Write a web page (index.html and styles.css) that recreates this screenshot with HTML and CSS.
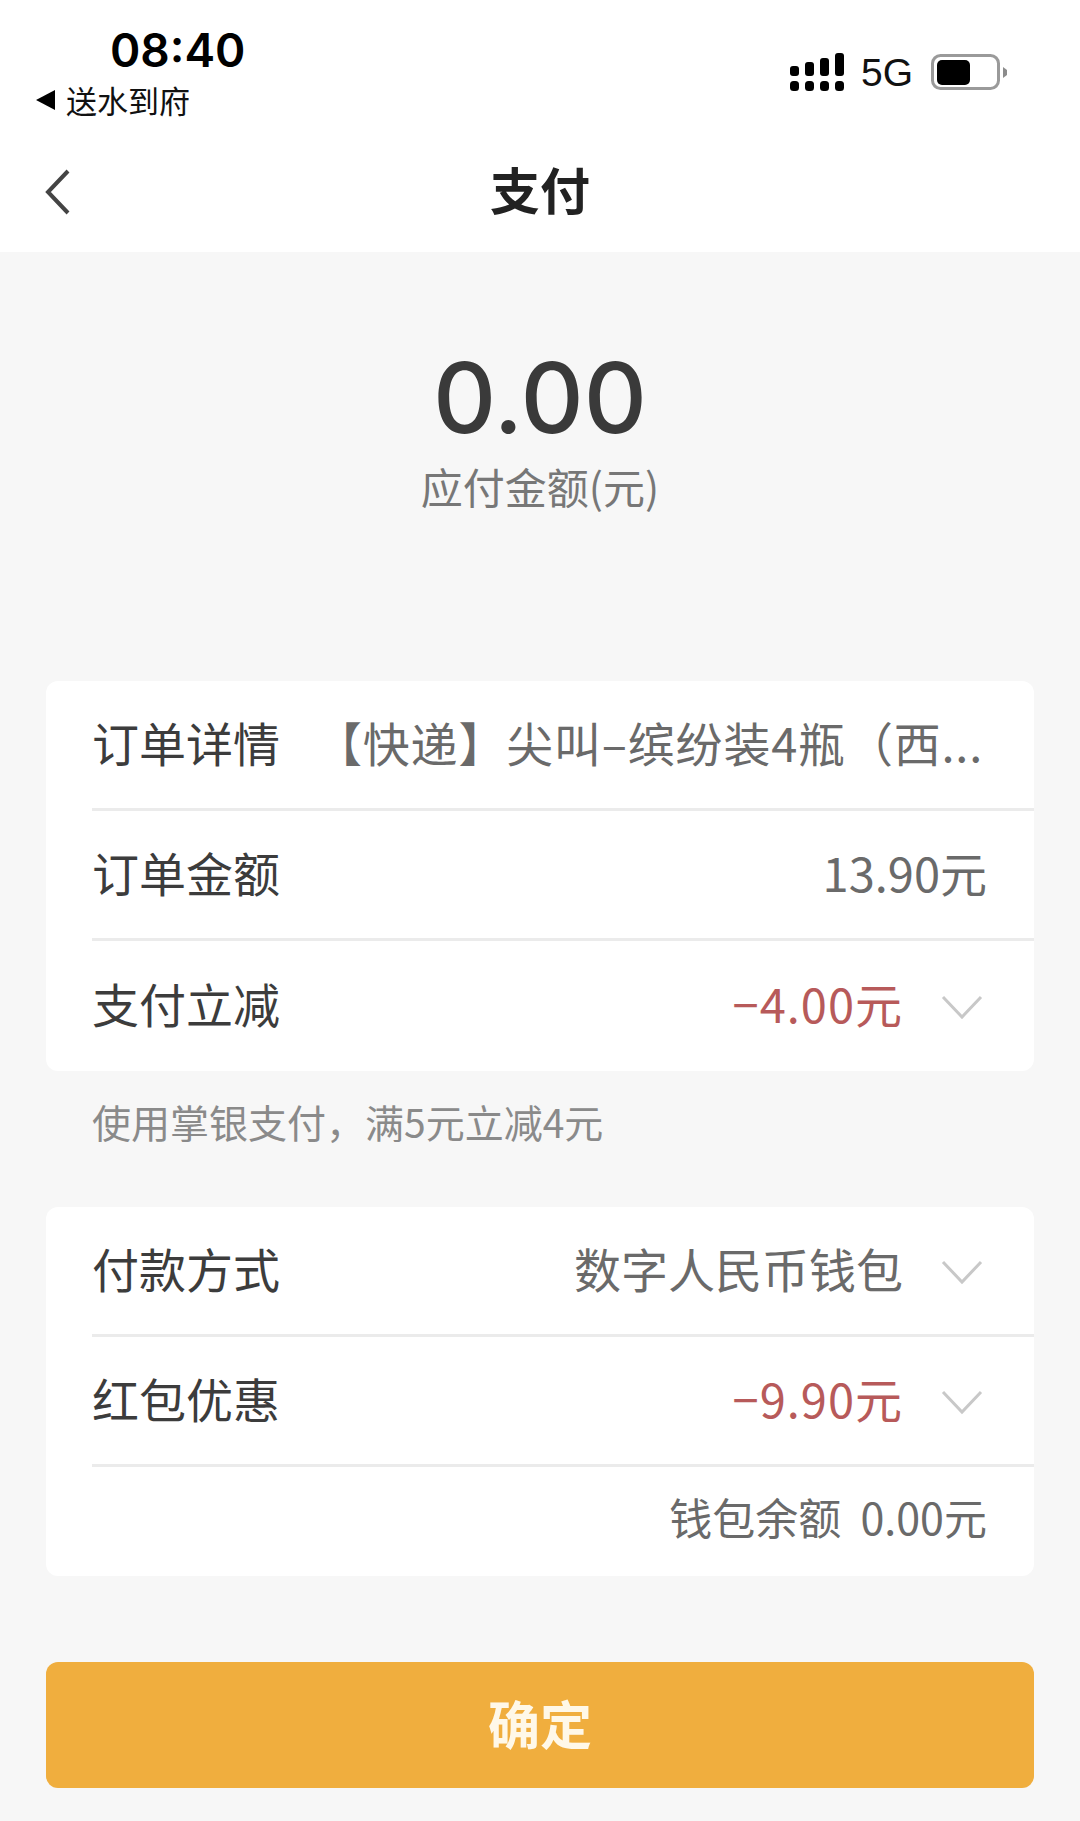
FILE: index.html
```html
<!DOCTYPE html>
<html lang="zh-CN">
<head>
    <meta charset="UTF-8">
    <meta name="viewport" content="width=device-width, initial-scale=1.0">
    <title>支付</title>
    <link rel="stylesheet" href="styles.css">
</head>
<body>
    <div class="top">
        <div class="status-bar">
            <div class="status-left">
                <div class="time">08:40</div>
                <div class="back-app"><span class="back-arrow"></span>送水到府</div>
            </div>
            <div class="status-right">
                <svg class="signal" width="54" height="38" viewBox="0 0 54 38">
                    <rect x="0" y="13" width="9" height="10" rx="3"/>
                    <rect x="15" y="9" width="9" height="14" rx="3"/>
                    <rect x="30" y="5" width="9" height="18" rx="3"/>
                    <rect x="45" y="0" width="9" height="23" rx="3"/>
                    <rect x="0" y="28" width="9" height="10" rx="3.5"/>
                    <rect x="15" y="28" width="9" height="10" rx="3.5"/>
                    <rect x="30" y="28" width="9" height="10" rx="3.5"/>
                    <rect x="45" y="28" width="9" height="10" rx="3.5"/>
                </svg>
                <span class="network">5G</span>
                <svg class="battery" width="76" height="36" viewBox="0 0 76 36">
                    <rect x="1.5" y="1.5" width="66" height="33" rx="8" fill="none" stroke="#9a9a9a" stroke-width="3"/>
                    <rect x="6" y="6" width="33" height="25" rx="5" fill="#000"/>
                    <path d="M72 13 L76 16 V21 L72 24 Z" fill="#8c8c8c"/>
                </svg>
            </div>
        </div>
        <div class="nav-bar">
            <svg class="nav-back" width="26" height="46" viewBox="0 0 26 46">
                <path d="M23 2 L3 23 L23 44" fill="none" stroke="#444" stroke-width="4"/>
            </svg>
            <h1 class="nav-title">支付</h1>
        </div>
    </div>

    <div class="amount">
        <div class="amount-num">0.00</div>
        <div class="amount-label">应付金额(元)</div>
    </div>

    <div class="card">
        <div class="row">
            <span class="row-label">订单详情</span>
            <span class="row-value row-detail">【快递】尖叫–缤纷装4瓶（西...</span>
        </div>
        <div class="row">
            <span class="row-label">订单金额</span>
            <span class="row-value">13.90元</span>
        </div>
        <div class="row">
            <span class="row-label">支付立减</span>
            <span class="row-value red">−4.00元</span>
            <svg class="chevron" width="42" height="26" viewBox="0 0 42 26"><path d="M2 3 L21 23 L40 3" fill="none" stroke="#c8c8c8" stroke-width="3"/></svg>
        </div>
    </div>

    <div class="note">使用掌银支付，满5元立减4元</div>

    <div class="card">
        <div class="row">
            <span class="row-label">付款方式</span>
            <span class="row-value">数字人民币钱包</span>
            <svg class="chevron" width="42" height="26" viewBox="0 0 42 26"><path d="M2 3 L21 23 L40 3" fill="none" stroke="#c8c8c8" stroke-width="3"/></svg>
        </div>
        <div class="row">
            <span class="row-label">红包优惠</span>
            <span class="row-value red">−9.90元</span>
            <svg class="chevron" width="42" height="26" viewBox="0 0 42 26"><path d="M2 3 L21 23 L40 3" fill="none" stroke="#c8c8c8" stroke-width="3"/></svg>
        </div>
        <div class="row row-small">
            <span class="row-value small">钱包余额&nbsp;&nbsp;0.00元</span>
        </div>
    </div>

    <button class="confirm-btn">确定</button>
</body>
</html>
```

FILE: styles.css
```css
* {
    box-sizing: border-box;
    margin: 0;
    padding: 0;
    font-family: "Noto Sans CJK SC", "Noto Sans", sans-serif;
}

body {
    background-color: #f7f7f7;
    min-height: 100vh;
    display: flex;
    flex-direction: column;
}

.top {
    background-color: white;
    height: 252px;
}

.status-bar {
    display: flex;
    justify-content: space-between;
    height: 125px;
    padding: 25px 73px 0 36px;
}

.status-left {
    display: flex;
    flex-direction: column;
}

.time {
    font-family: "Inter", sans-serif;
    font-size: 46px;
    font-weight: 600;
    line-height: 50px;
    margin-left: 74px;
    color: #000;
}

.back-app {
    display: flex;
    align-items: center;
    font-size: 31px;
    line-height: 50px;
    color: #111;
}

.back-arrow {
    width: 0;
    height: 0;
    border-top: 10px solid transparent;
    border-bottom: 10px solid transparent;
    border-right: 19px solid #000;
    margin-right: 11px;
}

.status-right {
    display: flex;
    align-items: flex-start;
    padding-top: 28px;
}

.network {
    font-family: "Liberation Sans", sans-serif;
    font-size: 39px;
    line-height: 38px;
    margin: 1px 18px 0 17px;
    color: #111;
}

.battery {
    margin-top: 1px;
}

.nav-bar {
    position: relative;
    height: 127px;
    display: flex;
    align-items: center;
    justify-content: center;
}

.nav-back {
    position: absolute;
    left: 45px;
    top: 44px;
}

.nav-title {
    font-size: 50px;
    font-weight: 700;
    line-height: 80px;
    margin-top: -2px;
    color: #222;
}

.amount {
    text-align: center;
    height: 429px;
    padding-top: 86px;
}

.amount-num {
    font-family: "Inter", sans-serif;
    font-size: 98px;
    font-weight: 500;
    line-height: 120px;
    color: #3a3a3a;
}

.amount-label {
    font-size: 42px;
    line-height: 56px;
    color: #777;
}

.card {
    background-color: white;
    border-radius: 12px;
    margin: 0 46px;
    padding-left: 46px;
}

.row {
    display: flex;
    align-items: center;
    height: 130px;
    padding: 0 47px 7px 0;
    border-bottom: 3px solid #ebebeb;
    font-size: 47px;
}

.row:last-child {
    border-bottom: none;
}

.row-label {
    flex-shrink: 0;
    color: #3c3c3c;
}

.row-value {
    flex: 1;
    min-width: 0;
    text-align: right;
    color: #6a6a6a;
}

.row-detail {
    margin-left: 35px;
    text-align: left;
    white-space: nowrap;
    letter-spacing: 0.8px;
}

.red {
    color: #b75a5a;
    letter-spacing: 1px;
}

.chevron {
    flex-shrink: 0;
    margin: 9px 4px 0 38px;
}

.row-small {
    height: 109px;
    padding-bottom: 12px;
}

.small {
    font-size: 43px;
}

.note {
    height: 136px;
    padding: 24px 0 0 92px;
    font-size: 39px;
    line-height: 52px;
    color: #8a8a8a;
}

.confirm-btn {
    display: block;
    height: 126px;
    margin: 86px 46px 0;
    padding-bottom: 6px;
    background-color: #f0ae3e;
    border: none;
    border-radius: 12px;
    color: #fff8e8;
    font-size: 52px;
    font-weight: 700;
}
```
